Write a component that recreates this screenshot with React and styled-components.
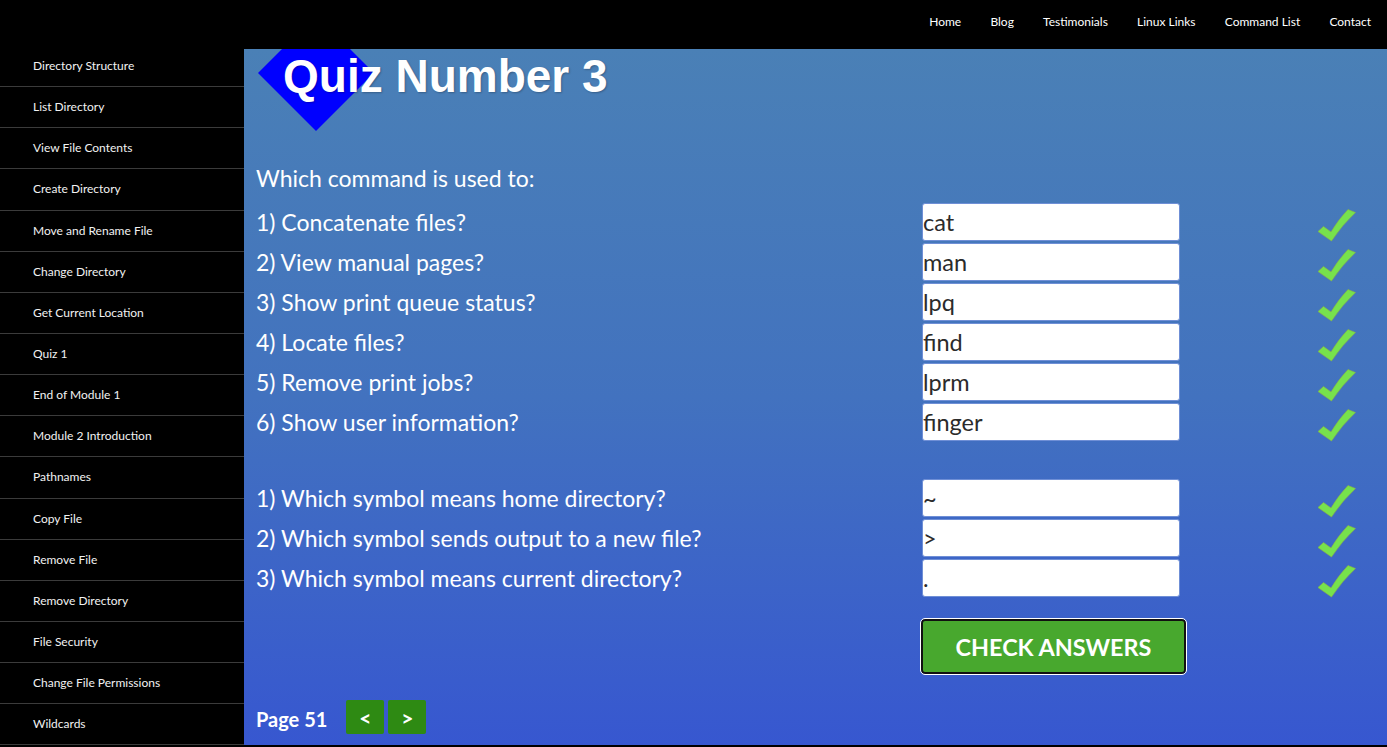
import React from "react";
import styled, { createGlobalStyle } from "styled-components";

const Global = createGlobalStyle`
  html, body { margin: 0; padding: 0; background: #000; }
  body { font-family: Lato, "Open Sans", sans-serif; }
  * { box-sizing: border-box; }
`;

const navLinks = ["Home", "Blog", "Testimonials", "Linux Links", "Command List", "Contact"];

const sideLinks = [
  "Directory Structure",
  "List Directory",
  "View File Contents",
  "Create Directory",
  "Move and Rename File",
  "Change Directory",
  "Get Current Location",
  "Quiz 1",
  "End of Module 1",
  "Module 2 Introduction",
  "Pathnames",
  "Copy File",
  "Remove File",
  "Remove Directory",
  "File Security",
  "Change File Permissions",
  "Wildcards",
];

const commandQs = [
  ["1) Concatenate files?", "cat"],
  ["2) View manual pages?", "man"],
  ["3) Show print queue status?", "lpq"],
  ["4) Locate files?", "find"],
  ["5) Remove print jobs?", "lprm"],
  ["6) Show user information?", "finger"],
];

const symbolQs = [
  ["1) Which symbol means home directory?", "~"],
  ["2) Which symbol sends output to a new file?", ">"],
  ["3) Which symbol means current directory?", "."],
];

const Page = styled.div`
  width: 1387px;
  height: 747px;
  background: #000;
  display: flex;
  flex-direction: column;
  overflow: hidden;
`;

const TopBar = styled.header`
  height: 46px;
  display: flex;
  justify-content: flex-end;
  align-items: center;
  gap: 29.2px;
  padding: 0 16px 4px 0;
`;

const NavLink = styled.a`
  color: #fff;
  font-size: 12px;
  text-decoration: none;
`;

const Body = styled.div`
  display: flex;
  flex: 1;
`;

const Sidebar = styled.nav`
  width: 244px;
  flex-shrink: 0;
  display: flex;
  flex-direction: column;
`;

const SideItem = styled.a`
  height: 41.15px;
  border-bottom: 1px solid #3b3b3b;
  display: flex;
  align-items: center;
  padding: 0 0 1px 33px;
  color: #f2f2f2;
  font-size: 12px;
  text-decoration: none;
`;

const Main = styled.main`
  flex: 1;
  margin-top: 3px;
  height: 696px;
  overflow: hidden;
  padding-left: 12px;
  background: linear-gradient(180deg, #4a80b6 0%, #4272bf 50%, #3757d0 100%);
  display: flex;
  flex-direction: column;
`;

const TitleBar = styled.div`
  position: relative;
  padding: 4px 0 0 27px;
  &::before {
    content: "";
    position: absolute;
    left: 19px;
    top: -17px;
    width: 82px;
    height: 82px;
    background: #0000ff;
    transform: rotate(45deg);
  }
`;

const Title = styled.h1`
  position: relative;
  margin: 0;
  font-family: "Liberation Sans", Arial, sans-serif;
  font-weight: bold;
  font-size: 46px;
  line-height: 46px;
  color: #fff;
  text-shadow: 1px 1px 2px rgba(0, 0, 0, 0.25);
`;

const Intro = styled.p`
  margin: 59px 0 5px;
  height: 40px;
  line-height: 40px;
  color: #fff;
  font-size: 23px;
`;

const Group = styled.div`
  display: flex;
  flex-direction: column;
  margin-bottom: ${(p) => p.$after}px;
`;

const Row = styled.div`
  display: grid;
  grid-template-columns: 666px 258px 136px 42px;
  height: 40px;
  align-items: start;
`;

const Question = styled.label`
  color: #fff;
  font-size: 23px;
  line-height: 38px;
`;

const Answer = styled.input`
  height: 38px;
  width: 258px;
  border: 1px solid #6f8fd6;
  border-radius: 3px;
  background: #fff;
  padding: 0;
  font-family: Lato, sans-serif;
  font-size: 23.5px;
  color: #2b2b2b;
  outline: none;
`;

const Tick = styled.svg`
  grid-column: 4;
  width: 42px;
  height: 34px;
  margin-top: 5px;
`;

const CheckButton = styled.button`
  align-self: flex-start;
  margin-left: 665px;
  width: 265px;
  height: 55px;
  border: 2px solid #111;
  outline: 1px solid #fff;
  outline-offset: 0;
  border-radius: 4px;
  background: #48a82e;
  color: #fff;
  font-family: Lato, sans-serif;
  font-weight: bold;
  font-size: 23.4px;
`;

const Pager = styled.div`
  display: flex;
  align-items: center;
  margin-top: 26px;
`;

const PageLabel = styled.span`
  color: #fff;
  font-weight: bold;
  font-size: 20px;
  margin: 4px 19px 0 0;
`;

const PageButton = styled.button`
  width: 38px;
  height: 34px;
  margin-right: 4px;
  border: none;
  border-radius: 2px;
  background: #2e8a13;
  color: #fff;
  font-family: Lato, sans-serif;
  font-weight: bold;
  font-size: 21px;
  padding: 0;
`;

function CheckMark() {
  return (
    <Tick viewBox="0 0 42 34">
      <path
        d="M2 23.5 L7.5 18.5 L15 24 Q22 12 32 1.5 L39.5 4.5 Q26 17 15.5 33 Z"
        fill="#77e24c"
        stroke="#8fb340"
        strokeWidth="0.6"
        strokeLinejoin="round"
      />
    </Tick>
  );
}

function QuizRow({ question, answer }) {
  return (
    <Row>
      <Question>{question}</Question>
      <Answer defaultValue={answer} />
      <CheckMark />
    </Row>
  );
}

export default function App() {
  return (
    <>
      <Global />
      <Page>
        <TopBar>
          {navLinks.map((l) => (
            <NavLink key={l} href="#">{l}</NavLink>
          ))}
        </TopBar>
        <Body>
          <Sidebar>
            {sideLinks.map((l) => (
              <SideItem key={l} href="#">{l}</SideItem>
            ))}
          </Sidebar>
          <Main>
            <TitleBar>
              <Title>Quiz Number 3</Title>
            </TitleBar>
            <Intro>Which command is used to:</Intro>
            <Group $after={36}>
              {commandQs.map(([q, a]) => (
                <QuizRow key={q} question={q} answer={a} />
              ))}
            </Group>
            <Group $after={20}>
              {symbolQs.map(([q, a]) => (
                <QuizRow key={q} question={q} answer={a} />
              ))}
            </Group>
            <CheckButton>CHECK ANSWERS</CheckButton>
            <Pager>
              <PageLabel>Page 51</PageLabel>
              <PageButton>&lt;</PageButton>
              <PageButton>&gt;</PageButton>
            </Pager>
          </Main>
        </Body>
      </Page>
    </>
  );
}
